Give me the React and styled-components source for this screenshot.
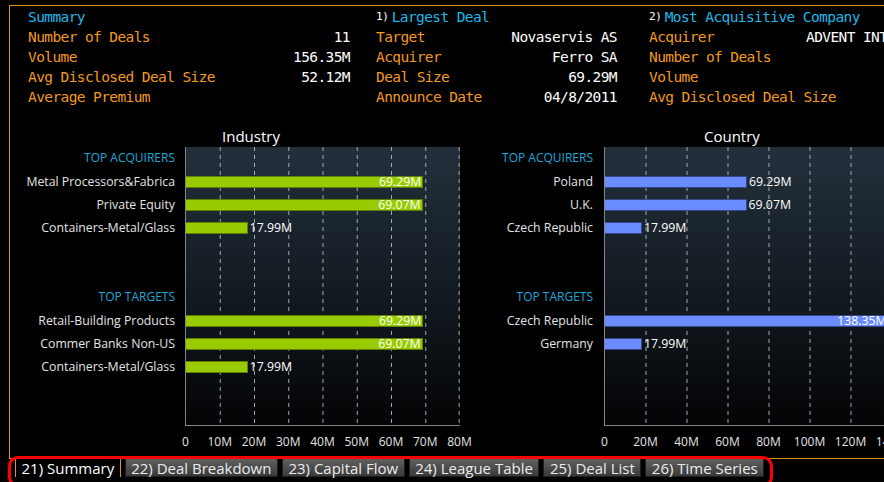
import React from "react";
import styled, { createGlobalStyle } from "styled-components";

const ORANGE = "#f29a1f";
const CYAN = "#1cb8ea";

const GlobalStyle = createGlobalStyle`
    html, body {
        margin: 0;
        background: #000;
        overflow: hidden;
    }
    #root {
        width: 884px;
        height: 482px;
        position: relative;
        overflow: hidden;
    }
`;

const summary = [
    ["Number of Deals", "11"],
    ["Volume", "156.35M"],
    ["Avg Disclosed Deal Size", "52.12M"],
    ["Average Premium", ""],
];

const largest = [
    ["Target", "Novaservis AS"],
    ["Acquirer", "Ferro SA"],
    ["Deal Size", "69.29M"],
    ["Announce Date", "04/8/2011"],
];

const acquisitive = [
    ["Acquirer", "ADVENT INTERNATIONAL"],
    ["Number of Deals", ""],
    ["Volume", ""],
    ["Avg Disclosed Deal Size", ""],
];

const industry = [
    {
        head: "TOP ACQUIRERS",
        rows: [
            ["Metal Processors&Fabrica", 69.29],
            ["Private Equity", 69.07],
            ["Containers-Metal/Glass", 17.99],
        ],
    },
    {
        head: "TOP TARGETS",
        rows: [
            ["Retail-Building Products", 69.29],
            ["Commer Banks Non-US", 69.07],
            ["Containers-Metal/Glass", 17.99],
        ],
    },
];

const country = [
    {
        head: "TOP ACQUIRERS",
        rows: [
            ["Poland", 69.29],
            ["U.K.", 69.07],
            ["Czech Republic", 17.99],
        ],
    },
    {
        head: "TOP TARGETS",
        rows: [
            ["Czech Republic", 138.35],
            ["Germany", 17.99],
        ],
    },
];

const tabs = [
    "21) Summary",
    "22) Deal Breakdown",
    "23) Capital Flow",
    "24) League Table",
    "25) Deal List",
    "26) Time Series",
];

function App() {
    return (
        <Page>
            <GlobalStyle />
            <Frame>
                <SummaryRow>
                    <Block $w={322}>
                        <Heading>Summary</Heading>
                        {summary.map(([l, v]) => (
                            <Line key={l}>
                                <Label>{l}</Label>
                                <Value>{v}</Value>
                            </Line>
                        ))}
                    </Block>
                    <Block $w={241} $ml={26}>
                        <Heading>
                            <Num>1)</Num>Largest Deal
                        </Heading>
                        {largest.map(([l, v]) => (
                            <Line key={l}>
                                <Label>{l}</Label>
                                <Value>{v}</Value>
                            </Line>
                        ))}
                    </Block>
                    <Block $w={320} $ml={32}>
                        <Heading>
                            <Num>2)</Num>Most Acquisitive Company
                        </Heading>
                        {acquisitive.map(([l, v]) => (
                            <Line key={l} $labelW={157}>
                                <Label>{l}</Label>
                                <Value>{v}</Value>
                            </Line>
                        ))}
                    </Block>
                </SummaryRow>

                <ChartsRow>
                    <Chart
                        title="Industry"
                        titlePad={212}
                        labelW={165}
                        gap={10}
                        plotW={274}
                        max={80}
                        ticks={["0", "10M", "20M", "30M", "40M", "50M", "60M", "70M", "80M"]}
                        color="#99cc00"
                        edge="#5f7f00"
                        sections={industry}
                    />
                    <Chart
                        ml={20}
                        title="Country"
                        titlePad={224}
                        labelW={113}
                        gap={11}
                        plotW={328}
                        max={160}
                        ticks={["0", "20M", "40M", "60M", "80M", "100M", "120M", "140M", "160M"]}
                        color="#6a8cff"
                        edge="#34478a"
                        sections={country}
                    />
                </ChartsRow>
            </Frame>

            <TabBar>
                {tabs.map((t, i) => (
                    <Tab key={t} $active={i === 0}>
                        {t}
                    </Tab>
                ))}
            </TabBar>
            <Highlight />
        </Page>
    );
}

export default App;

function Chart(props) {
    const cell = props.plotW / 8;
    return (
        <ChartBox $ml={props.ml || 0} $w={props.labelW + props.gap + props.plotW + 1}>
            <ChartTitle $pl={props.titlePad}>{props.title}</ChartTitle>
            <ChartBody>
                <LabelCol $w={props.labelW} $gap={props.gap}>
                    {props.sections.map((s) => (
                        <React.Fragment key={s.head}>
                            <SectionHead>{s.head}</SectionHead>
                            {[0, 1, 2].map((i) => (
                                <RowLabel key={i}>{s.rows[i] ? s.rows[i][0] : ""}</RowLabel>
                            ))}
                            <Spacer />
                        </React.Fragment>
                    ))}
                </LabelCol>
                <Plot $w={props.plotW}>
                    <GridSvg>
                        {[1, 2, 3, 4, 5, 6, 7, 8].map((i) => (
                            <line
                                key={i}
                                x1={`${Math.min(i * 12.5, 99.7)}%`}
                                x2={`${Math.min(i * 12.5, 99.7)}%`}
                                y1="0"
                                y2="100%"
                                stroke="#a3a9b0"
                                strokeWidth="1"
                                strokeDasharray="4 4"
                            />
                        ))}
                    </GridSvg>
                    {props.sections.map((s) => (
                        <React.Fragment key={s.head}>
                            <HeadSpace />
                            {[0, 1, 2].map((i) => {
                                const r = s.rows[i];
                                if (!r) return <BarRow key={i} />;
                                const inside = r[1] / props.max > 0.5;
                                return (
                                    <BarRow key={i}>
                                        <Bar
                                            $color={props.color}
                                            $edge={props.edge}
                                            style={{ width: `${(r[1] / props.max) * 100}%` }}
                                        >
                                            {inside && <BarValue>{r[1].toFixed(2)}M</BarValue>}
                                        </Bar>
                                        {!inside && <OutValue>{r[1].toFixed(2)}M</OutValue>}
                                    </BarRow>
                                );
                            })}
                            <Spacer />
                        </React.Fragment>
                    ))}
                </Plot>
            </ChartBody>
            <Axis $pl={props.labelW + props.gap + 0.5 - cell / 2}>
                {props.ticks.map((t) => (
                    <Tick key={t} $w={cell}>
                        {t}
                    </Tick>
                ))}
            </Axis>
        </ChartBox>
    );
}

const Page = styled.div`
    position: relative;
    width: 884px;
    height: 482px;
`;

const Frame = styled.div`
    margin: 5px 0 0 9px;
    height: 454px;
    box-sizing: border-box;
    border-top: 1px solid #e0901c;
    border-left: 1px solid #e0901c;
    border-bottom: 1px solid #e0901c;
    display: flex;
    flex-direction: column;
`;

const SummaryRow = styled.div`
    display: flex;
    padding: 1px 0 0 18px;
    font-family: "DejaVu Sans Mono", monospace;
    font-size: 14.5px;
    letter-spacing: -0.6px;
    line-height: 20px;
`;

const Block = styled.div`
    width: ${(p) => p.$w}px;
    flex-shrink: 0;
    margin-left: ${(p) => p.$ml || 0}px;
`;

const Heading = styled.div`
    color: ${CYAN};
    white-space: nowrap;
    height: 20px;
    line-height: 20px;
    overflow: hidden;
`;

const Num = styled.span`
    color: #fff;
    font-size: 11px;
    letter-spacing: -0.3px;
    margin-right: 3px;
    vertical-align: top;
`;

const Line = styled.div`
    display: grid;
    grid-template-columns: ${(p) => (p.$labelW ? `${p.$labelW}px auto` : "1fr auto")};
    white-space: nowrap;
    height: 20px;
`;

const Label = styled.span`
    color: ${ORANGE};
`;

const Value = styled.span`
    color: #fff;
`;

const ChartsRow = styled.div`
    display: flex;
    margin-top: 20px;
    font-family: "Open Sans", "Liberation Sans", sans-serif;
`;

const ChartBox = styled.div`
    display: flex;
    flex-direction: column;
    flex-shrink: 0;
    width: ${(p) => p.$w}px;
    margin-left: ${(p) => p.$ml}px;
`;

const ChartTitle = styled.div`
    height: 20px;
    line-height: 19px;
    padding-left: ${(p) => p.$pl}px;
    color: #fff;
    font-size: 15px;
    white-space: nowrap;
`;

const ChartBody = styled.div`
    display: flex;
`;

const LabelCol = styled.div`
    width: ${(p) => p.$w}px;
    margin-right: ${(p) => p.$gap}px;
    display: flex;
    flex-direction: column;
    align-items: flex-end;
    flex-shrink: 0;
`;

const SectionHead = styled.div`
    height: 23px;
    line-height: 21px;
    font-size: 12px;
    color: #1ea8d8;
    white-space: nowrap;
`;

const RowLabel = styled.div`
    height: 23px;
    line-height: 23px;
    font-size: 12.3px;
    color: #e4e4e4;
    white-space: nowrap;
`;

const Spacer = styled.div`
    height: 47px;
`;

const HeadSpace = styled.div`
    height: 23px;
`;

const Plot = styled.div`
    position: relative;
    width: ${(p) => p.$w}px;
    flex-shrink: 0;
    border-left: 1px solid #858585;
    border-bottom: 1px solid #858585;
    background: linear-gradient(#23303b 0%, #121920 55%, #030405 100%);
`;

const GridSvg = styled.svg`
    position: absolute;
    inset: 0;
    width: 100%;
    height: 100%;
`;

const BarRow = styled.div`
    position: relative;
    height: 23px;
    display: flex;
    align-items: center;
`;

const Bar = styled.div`
    height: 12px;
    box-sizing: border-box;
    background: ${(p) => p.$color};
    border: 1px solid ${(p) => p.$edge};
    border-left: none;
    display: flex;
    justify-content: flex-end;
    align-items: center;
    flex-shrink: 0;
`;

const BarValue = styled.span`
    color: #fff;
    font-size: 12.3px;
    line-height: 12px;
    padding-right: 1px;
    white-space: nowrap;
`;

const OutValue = styled.span`
    color: #fff;
    font-size: 12.3px;
    margin-left: 2px;
    white-space: nowrap;
`;

const Axis = styled.div`
    display: flex;
    margin-top: 8px;
    padding-left: ${(p) => p.$pl}px;
`;

const Tick = styled.div`
    width: ${(p) => p.$w}px;
    flex-shrink: 0;
    text-align: center;
    font-size: 12px;
    line-height: 16px;
    color: #e4e4e4;
`;

const TabBar = styled.div`
    display: flex;
    gap: 4px;
    margin: -1px 0 0 15px;
    font-family: "Open Sans", "Liberation Sans", sans-serif;
`;

const Tab = styled.div`
    height: 19px;
    line-height: 18px;
    padding: 0 5.5px;
    box-sizing: border-box;
    font-size: 15px;
    white-space: nowrap;
    color: ${(p) => (p.$active ? "#fff" : "#ececec")};
    background: ${(p) => (p.$active ? "#000" : "linear-gradient(#606060, #3a3a3a)")};
    border: 1px solid ${(p) => (p.$active ? "#e0901c" : "#1e1e1e")};
    border-bottom: ${(p) => (p.$active ? "none" : "1px solid #1e1e1e")};
`;

const Highlight = styled.div`
    position: absolute;
    left: 8px;
    top: 451px;
    width: 765px;
    height: 31px;
    box-sizing: border-box;
    border: 3px solid #ff0000;
    border-radius: 10px;
    pointer-events: none;
`;
